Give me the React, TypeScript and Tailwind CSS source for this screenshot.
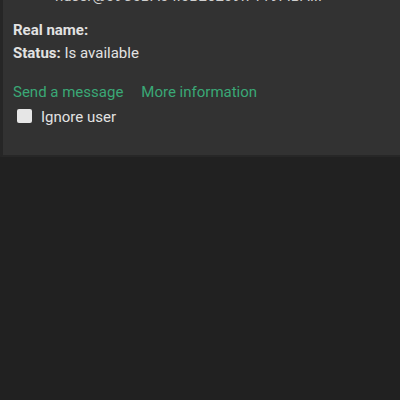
export default function App() {
  return (
    <div className="w-[400px] h-[400px] bg-[#212121] overflow-hidden" style={{ fontFamily: "Roboto, 'Noto Sans', sans-serif" }}>
      <div className="h-[157px] bg-[#323232] border-l-[3px] border-[#262626] border-b-2 border-b-[#272727] overflow-hidden">
        <div className="pl-[52px] -mt-[13px] text-[15px] leading-[18px] text-[#cfcfcf] whitespace-nowrap">
          nuser@09C0BA04.0B26209.7119FIBA.IP
        </div>
        <div className="pl-[10px] pt-[14px] text-[15px] text-[#e2e2e2]">
          <div className="leading-[23px] font-bold">Real name:</div>
          <div className="leading-[23px]"><span className="font-bold">Status:</span> Is available</div>
          <div className="mt-[16px] flex gap-[18px] leading-[23px] text-[#3aa876]">
            <span>Send a message</span>
            <span>More information</span>
          </div>
          <div className="flex items-center leading-[23px] mt-[2px]">
            <span className="ml-[4px] w-[15px] h-[14px] bg-[#e6e6e6] rounded-[2px] mr-[9px] -mt-[3px]" />
            <span>Ignore user</span>
          </div>
        </div>
      </div>
    </div>
  );
}
